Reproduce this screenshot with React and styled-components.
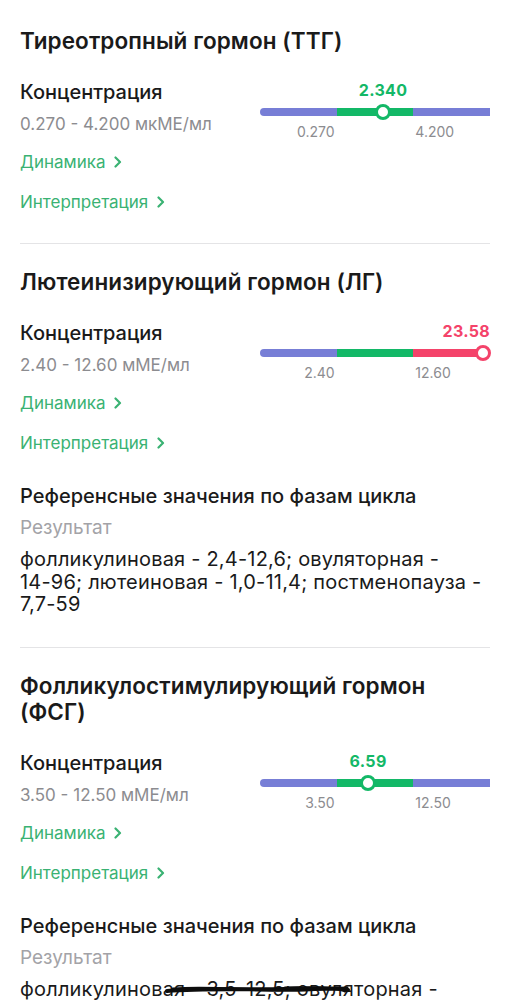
import React from 'react';
import styled, { createGlobalStyle } from 'styled-components';

const GlobalStyle = createGlobalStyle`
  body {
    margin: 0;
    background: #fff;
    font-family: Inter, "Noto Sans", sans-serif;
    color: #1c1c1e;
  }
`;

const PURPLE = '#777ed6';
const GREEN = '#13b867';
const RED = '#f4436a';

const Page = styled.div`
  padding: 28px 21px 40px 20px;
`;

const Section = styled.section`
  padding-top: ${(p) => (p.$first ? 0 : 25)}px;
`;

const Title = styled.h2`
  margin: 0;
  font-size: 22.5px;
  line-height: 26px;
  font-weight: 600;
  letter-spacing: 0.1px;
  color: #1a1a1a;
`;

const MeasureRow = styled.div`
  margin-top: 26px;
  display: grid;
  grid-template-columns: 1fr 230px;
  align-items: start;
`;

const Label = styled.div`
  font-size: 20px;
  line-height: 24px;
  font-weight: 500;
  color: #1a1a1a;
`;

const RangeText = styled.div`
  margin-top: 10px;
  font-size: 17px;
  line-height: 20px;
  color: #8c8c90;
`;

const Gauge = styled.div`
  display: flex;
  flex-direction: column;
`;

const ValueLine = styled.div`
  position: relative;
  height: 20px;
`;

const Value = styled.span`
  position: absolute;
  top: 0;
  font-size: 16px;
  line-height: 20px;
  font-weight: 700;
  letter-spacing: 0.3px;
  color: ${(p) => (p.$bad ? RED : GREEN)};
  white-space: nowrap;
`;

const Bar = styled.div`
  position: relative;
  margin-top: 8px;
  height: 8px;
  display: flex;
  border-radius: 4px;
`;

const Segment = styled.div`
  flex: 1;
  background: ${(p) => p.$color};
  &:first-child {
    border-radius: 4px 0 0 4px;
  }
  &:last-child {
    border-radius: 0 4px 4px 0;
  }
`;

const Thumb = styled.div`
  position: absolute;
  top: 50%;
  width: 16px;
  height: 16px;
  box-sizing: border-box;
  border-radius: 50%;
  background: #fff;
  border: 3px solid ${(p) => p.$color};
  transform: translate(-50%, -50%);
`;

const Ticks = styled.div`
  margin-top: 7px;
  display: grid;
  grid-template-columns: 1fr 1fr 1fr;
  font-size: 14px;
  line-height: 18px;
  color: #8c8c90;
`;

const Tick = styled.span`
  text-align: ${(p) => p.$align};
  padding: 0 2px;
`;

const LinkRow = styled.a`
  display: flex;
  align-items: center;
  gap: 9px;
  margin-top: ${(p) => p.$gap}px;
  font-size: 17px;
  line-height: 20px;
  font-weight: 400;
  color: #3ab273;
  text-decoration: none;
`;

const RefBlock = styled.div`
  margin-top: 31px;
`;

const RefTitle = styled.div`
  font-size: 20px;
  line-height: 24px;
  font-weight: 500;
  color: #1a1a1a;
`;

const RefCaption = styled.div`
  margin-top: 9px;
  font-size: 19px;
  line-height: 22px;
  color: #a3a3a7;
`;

const RefText = styled.div`
  position: relative;
  margin-top: 9px;
  font-size: 20px;
  line-height: 22.5px;
  letter-spacing: 0.2px;
  color: #1a1a1a;
`;

const Nums = styled.span`
  white-space: nowrap;
`;

const Scribble = styled.svg`
  position: absolute;
  left: 145px;
  top: 2px;
  width: 185px;
  height: 16px;
`;

const Divider = styled.hr`
  margin: 31px 0 0 0;
  border: 0;
  height: 1px;
  background: #e4e4e6;
`;

const Chevron = () => (
  <svg width="8" height="12" viewBox="0 0 8 12">
    <path d="M1.5 1.5L6 6L1.5 10.5" fill="none" stroke="#3ab273" strokeWidth="2.2" strokeLinecap="round" strokeLinejoin="round" />
  </svg>
);

const Link = ({ children, gap }) => (
  <LinkRow $gap={gap}>
    {children}
    <Chevron />
  </LinkRow>
);

const Meter = ({ value, pos, low, high, bad }) => {
  const thumbColor = bad ? RED : GREEN;
  const labelStyle = pos > 85 ? { right: 0 } : { left: `${pos}%`, transform: 'translateX(-50%)' };
  return (
    <Gauge>
      <ValueLine>
        <Value $bad={bad} style={labelStyle}>{value}</Value>
      </ValueLine>
      <Bar>
        <Segment $color={PURPLE} />
        <Segment $color={GREEN} />
        <Segment $color={bad ? RED : PURPLE} />
        <Thumb $color={thumbColor} style={{ left: `${pos}%` }} />
      </Bar>
      <Ticks>
        <Tick $align="right">{low}</Tick>
        <span />
        <Tick $align="left">{high}</Tick>
      </Ticks>
    </Gauge>
  );
};

const hormones = [
  {
    title: 'Тиреотропный гормон (ТТГ)',
    value: '2.340',
    pos: 53.5,
    low: '0.270',
    high: '4.200',
    range: '0.270 - 4.200 мкМЕ/мл',
  },
  {
    title: 'Лютеинизирующий гормон (ЛГ)',
    value: '23.58',
    pos: 96.8,
    low: '2.40',
    high: '12.60',
    range: '2.40 - 12.60 мМЕ/мл',
    bad: true,
    phases: [
      ['фолликулиновая', '2,4-12,6'],
      ['овуляторная', '14-96'],
      ['лютеиновая', '1,0-11,4'],
      ['постменопауза', '7,7-59'],
    ],
  },
  {
    title: 'Фолликулостимулирующий гормон (ФСГ)',
    value: '6.59',
    pos: 47,
    low: '3.50',
    high: '12.50',
    range: '3.50 - 12.50 мМЕ/мл',
    phases: [
      ['фолликулиновая', '3,5-12,5'],
      ['овуляторная', '4,7-21,5'],
      ['лютеиновая', '1,7-7,7'],
      ['постменопауза', '25,8-134,8'],
    ],
    hidden: true,
  },
];

const App = () => (
  <Page>
    <GlobalStyle />
    {hormones.map((h, i) => (
      <React.Fragment key={h.title}>
        <Section $first={i === 0}>
          <Title>{h.title}</Title>
          <MeasureRow>
            <div>
              <Label>Концентрация</Label>
              <RangeText>{h.range}</RangeText>
            </div>
            <Meter value={h.value} pos={h.pos} low={h.low} high={h.high} bad={h.bad} />
          </MeasureRow>
          <Link gap={11}>Динамика</Link>
          <Link gap={20}>Интерпретация</Link>
          {h.phases && (
            <RefBlock>
              <RefTitle>Референсные значения по фазам цикла</RefTitle>
              <RefCaption>Результат</RefCaption>
              <RefText>
                {h.phases.map(([name, nums], k) => (
                  <React.Fragment key={name}>
                    {name} - <Nums>{nums}{k < h.phases.length - 1 ? ';' : ''}</Nums>
                    {k < h.phases.length - 1 ? ' ' : ''}
                  </React.Fragment>
                ))}
                {h.hidden && (
                  <Scribble viewBox="0 0 185 16">
                    <path d="M2 11 C40 8 80 10 120 9 S170 8 183 10" fill="none" stroke="#0d0d0d" strokeWidth="4" strokeLinecap="round" />
                    <path d="M8 9 C50 6 100 12 140 10 S175 9 180 11" fill="none" stroke="#0d0d0d" strokeWidth="3" strokeLinecap="round" />
                    <path d="M120 8 C140 7 160 9 182 8" fill="none" stroke="#0d0d0d" strokeWidth="3" strokeLinecap="round" />
                  </Scribble>
                )}
              </RefText>
            </RefBlock>
          )}
        </Section>
        {i < hormones.length - 1 && <Divider />}
      </React.Fragment>
    ))}
  </Page>
);

export default App;
